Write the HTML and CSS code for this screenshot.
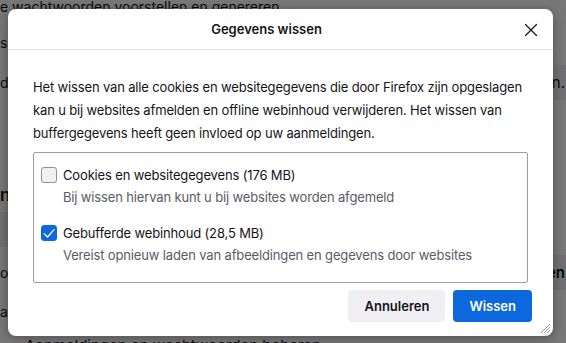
FILE: index.html
```html
<!DOCTYPE html>
<html lang="nl">
<head>
  <meta charset="UTF-8" />
  <title>Gegevens wissen</title>
  <link rel="stylesheet" href="styles.css">
</head>
<body>
  <div class="page">
    <div class="row r1"><span>e wachtwoorden voorstellen en genereren</span></div>
    <div class="row r2"><span>sc</span></div>
    <div class="row r3"><span>d</span><span class="pg-btn">en.</span></div>
    <div class="row r4"><span class="pg-head">n</span></div>
    <div class="row r5 band"></div>
    <div class="row r6"><span>or</span><span class="pg-btn bold">en</span></div>
    <div class="row r7"><span>at</span></div>
    <div class="row r8"><span class="pg-foot">Aanmeldingen en wachtwoorden beheren</span></div>
  </div>
  <div class="overlay"></div>

  <div class="dialog">
    <div class="dialog-head">
      <span class="dialog-title">Gegevens wissen</span>
      <button class="close-btn" title="Sluiten">
        <svg width="14" height="14" viewBox="0 0 14 14"><path d="M1.5 1.5 L12.5 12.5 M12.5 1.5 L1.5 12.5" stroke="#1c1b22" stroke-width="1.3" fill="none" stroke-linecap="round"/></svg>
      </button>
    </div>
    <div class="dialog-body">
      <p class="intro">Het wissen van alle cookies en websitegegevens die door Firefox zijn opgeslagen kan u bij websites afmelden en offline webinhoud verwijderen. Het wissen van buffergegevens heeft geen invloed op uw aanmeldingen.</p>
      <div class="options">
        <div class="option">
          <div class="option-row">
            <span class="check"></span>
            <span class="option-label">Cookies en websitegegevens (176 MB)</span>
          </div>
          <div class="option-desc">Bij wissen hiervan kunt u bij websites worden afgemeld</div>
        </div>
        <div class="option">
          <div class="option-row">
            <span class="check checked">
              <svg width="16" height="16" viewBox="0 0 16 16"><path d="M3.2 8.6 L6.6 12 L13 4.6" stroke="#fff" stroke-width="1.3" fill="none" stroke-linecap="round" stroke-linejoin="round"/></svg>
            </span>
            <span class="option-label">Gebufferde webinhoud (28,5 MB)</span>
          </div>
          <div class="option-desc">Vereist opnieuw laden van afbeeldingen en gegevens door websites</div>
        </div>
      </div>
    </div>
    <div class="dialog-foot">
      <button class="btn">Annuleren</button>
      <button class="btn primary">Wissen</button>
    </div>
    <svg class="grip" width="12" height="12" viewBox="0 0 12 12"><path d="M11 2 L2 11 M11 5 L5 11 M11 8 L8 11" stroke="#9a9aa2" stroke-width="1" fill="none"/></svg>
  </div>
</body>
</html>
```

FILE: styles.css
```css
* { box-sizing: border-box; }
html, body {
  margin: 0;
  padding: 0;
  height: 100%;
  overflow: hidden;
}
body {
  font-family: Inter, "Liberation Sans", sans-serif;
  font-size: 13px;
  color: #15141a;
  background: #fff;
  position: relative;
}

/* page behind the dialog */
.page {
  font-size: 14px;
  color: #15141a;
}
.row {
  display: flex;
  align-items: center;
  justify-content: space-between;
  white-space: nowrap;
}
.r1 { height: 12px; }
.r2 { height: 36px; margin-top: 12px; }
.r3 { height: 35px; margin-top: 5px; }
.r4 { height: 30px; margin-top: 80px; }
.r5 { height: 35px; margin-top: 2px; width: 300px; }
.r6 { height: 35px; margin-top: 8px; }
.r7 { height: 42px; }
.r8 { height: 26px; padding-left: 25px; }
.band { background: #f0f0f4; }
.pg-btn {
  background: #f0f0f4;
  height: 100%;
  width: 40px;
  display: flex;
  align-items: center;
  justify-content: flex-end;
  padding-right: 1px;
  font-size: 15px;
}
.pg-btn.bold, .pg-head { font-weight: 600; }
.pg-head { font-size: 17px; }
.pg-foot { font-size: 15px; }

.overlay {
  position: absolute;
  inset: 0;
  background: rgba(0, 0, 0, 0.53);
}

/* dialog */
.dialog {
  position: absolute;
  left: 8px;
  top: 9px;
  width: 545px;
  height: 327px;
  background: #fff;
  border-radius: 8px;
  box-shadow: 0 2px 12px rgba(0, 0, 0, 0.35);
  display: flex;
  flex-direction: column;
  letter-spacing: -0.15px;
}
.dialog-head {
  height: 41px;
  padding-right: 28px;
  border-bottom: 1px solid #e0e0e6;
  display: flex;
  align-items: center;
  justify-content: center;
  position: relative;
}
.dialog-title {
  font-size: 13px;
  font-weight: 600;
  letter-spacing: 0;
  color: #15141a;
}
.close-btn {
  position: absolute;
  right: 15px;
  top: 14px;
  width: 14px;
  height: 14px;
  padding: 0;
  border: none;
  background: none;
  display: flex;
}
.dialog-body {
  padding: 26px 15px 0 25px;
}
.intro {
  margin: 0;
  line-height: 23px;
}
.options {
  margin-top: 7px;
  margin-right: 10px;
  border: 1px solid #9e9ea6;
  border-radius: 2px;
  padding: 11px 7px 16px 7px;
  display: flex;
  flex-direction: column;
  gap: 14px;
}
.option-row {
  display: flex;
  align-items: center;
  gap: 6px;
  height: 22px;
}
.check {
  width: 16px;
  height: 16px;
  border: 1px solid #8f8f9d;
  border-radius: 3px;
  background: #f0f0f4;
  display: flex;
}
.check.checked {
  background: #0c68dc;
  border-color: #0c68dc;
}
.check.checked svg { margin: -1px; }
.option-label { color: #15141a; }
.option-desc {
  padding-left: 22px;
  height: 22px;
  line-height: 22px;
  color: #5b5b66;
}
.dialog-foot {
  margin-top: auto;
  padding: 0 21px 14px 0;
  display: flex;
  justify-content: flex-end;
  gap: 8px;
}
.btn {
  height: 32px;
  padding: 0 16px;
  border: none;
  border-radius: 4px;
  background: #f0f0f4;
  color: #15141a;
  font-family: inherit;
  font-size: 13px;
  font-weight: 600;
  letter-spacing: 0;
}
.btn.primary {
  background: #0c68dc;
  color: #fff;
}
.grip {
  position: absolute;
  right: 2px;
  bottom: 2px;
}
```
